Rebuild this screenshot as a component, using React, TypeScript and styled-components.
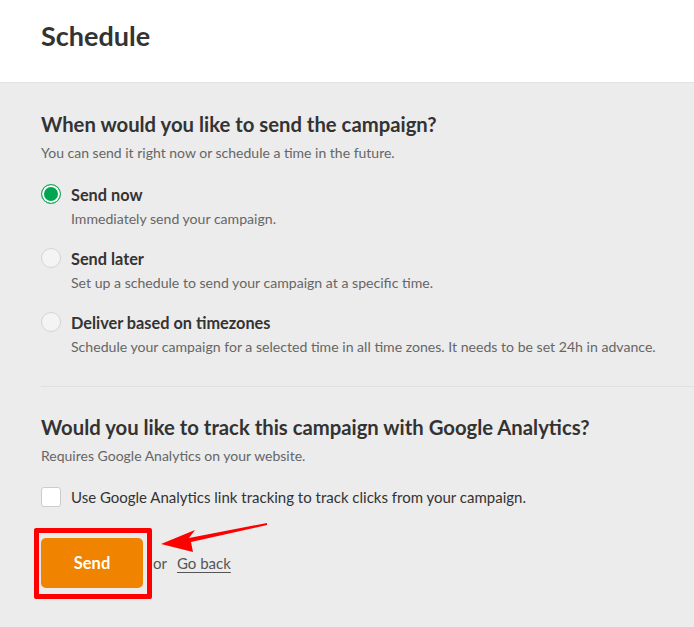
import React from 'react';
import styled, { createGlobalStyle } from 'styled-components';

const GlobalStyle = createGlobalStyle`
    html, body {
        margin: 0;
        padding: 0;
        background: #ececec;
        font-family: Lato, "Open Sans", Arial, sans-serif;
        color: #333;
    }
`;

const Page = styled.div`
    min-height: 627px;
    background: #ececec;
`;
const TopBar = styled.header`
    background: #fff;
    height: 83px;
    border-bottom: 1px solid #e2e2e2;
    padding-left: 41px;
    display: flex;
    align-items: center;
    box-sizing: border-box;
`;
const Title = styled.h1`
    margin: 0 0 12px;
    font-size: 27px;
    font-weight: 700;
    color: #333;
`;
const Body = styled.main`
    padding: 28px 0 0 41px;
`;
const Section = styled.section<{ $divided?: boolean }>`
    padding-bottom: ${p => (p.$divided ? '30px' : '0')};
    border-bottom: ${p => (p.$divided ? '1px solid #e0e0e0' : 'none')};
    margin-bottom: ${p => (p.$divided ? '27px' : '0')};
`;
const Heading = styled.h2`
    margin: 0;
    font-size: 20.3px;
    font-weight: 700;
    line-height: 26px;
    color: #333;
`;
const Hint = styled.p`
    margin: 7px 0 0;
    font-size: 14px;
    line-height: 18px;
    color: #666;
`;
const OptionList = styled.div`
    margin-top: 22px;
    display: flex;
    flex-direction: column;
    gap: 20px;
`;
const Option = styled.label`
    display: grid;
    grid-template-columns: 20px 1fr;
    column-gap: 10px;
    row-gap: 6px;
    align-items: center;
`;
const Radio = styled.span<{ $checked?: boolean }>`
    width: 20px;
    height: 20px;
    box-sizing: border-box;
    border-radius: 50%;
    border: 1px solid ${p => (p.$checked ? '#1ea85a' : '#d4d4d4')};
    background: ${p => (p.$checked ? '#00a651' : '#f4f4f4')};
    box-shadow: ${p => (p.$checked ? 'inset 0 0 0 2px #fff' : 'none')};
`;
const OptionLabel = styled.span`
    font-size: 16.3px;
    font-weight: 700;
    color: #333;
`;
const OptionDesc = styled.span`
    grid-column: 2;
    font-size: 14.1px;
    line-height: 18px;
    color: #666;
`;
const CheckRow = styled.label`
    margin-top: 22px;
    display: flex;
    align-items: center;
    gap: 10px;
    font-size: 15px;
    color: #333;
`;
const Checkbox = styled.span`
    width: 20px;
    height: 20px;
    box-sizing: border-box;
    border: 1px solid #ccc;
    border-radius: 3px;
    background: #fff;
`;
const Actions = styled.div`
    margin-top: 31px;
    display: flex;
    align-items: center;
    gap: 10px;
`;
const ButtonWrap = styled.div`
    position: relative;
`;
const SendButton = styled.button`
    width: 102px;
    height: 50px;
    border: none;
    border-radius: 5px;
    background: #f08300;
    color: #fff;
    font-family: inherit;
    font-size: 16.5px;
    font-weight: 700;
    cursor: pointer;
`;
const Highlight = styled.span`
    position: absolute;
    left: -7px;
    top: -10px;
    width: 118px;
    height: 71px;
    box-sizing: border-box;
    border: 5px solid #ff0000;
    border-radius: 2px;
    pointer-events: none;
`;
const Arrow = styled.svg`
    position: absolute;
    left: 112px;
    top: -20px;
    pointer-events: none;
`;
const Or = styled.span`
    font-size: 15px;
    color: #555;
`;
const BackLink = styled.a`
    font-size: 15px;
    color: #555;
    text-decoration: underline;
    text-underline-offset: 3px;
`;

const options = [
    { label: 'Send now', desc: 'Immediately send your campaign.', checked: true },
    { label: 'Send later', desc: 'Set up a schedule to send your campaign at a specific time.' },
    {
        label: 'Deliver based on timezones',
        desc: 'Schedule your campaign for a selected time in all time zones. It needs to be set 24h in advance.',
    },
];

export default function App() {
    return (
        <Page>
            <GlobalStyle />
            <TopBar>
                <Title>Schedule</Title>
            </TopBar>
            <Body>
                <Section $divided>
                    <Heading>When would you like to send the campaign?</Heading>
                    <Hint>You can send it right now or schedule a time in the future.</Hint>
                    <OptionList>
                        {options.map(o => (
                            <Option key={o.label}>
                                <Radio $checked={o.checked} />
                                <OptionLabel>{o.label}</OptionLabel>
                                <OptionDesc>{o.desc}</OptionDesc>
                            </Option>
                        ))}
                    </OptionList>
                </Section>
                <Section>
                    <Heading>Would you like to track this campaign with Google Analytics?</Heading>
                    <Hint>Requires Google Analytics on your website.</Hint>
                    <CheckRow>
                        <Checkbox />
                        Use Google Analytics link tracking to track clicks from your campaign.
                    </CheckRow>
                </Section>
                <Actions>
                    <ButtonWrap>
                        <SendButton>Send</SendButton>
                        <Highlight />
                        <Arrow width="120" height="40" viewBox="0 0 120 40">
                            <path d="M8 26 L42 12 L36 20 L114 5 L114 7 L38 24 L40 34 Z" fill="#ff0000" />
                        </Arrow>
                    </ButtonWrap>
                    <Or>or</Or>
                    <BackLink href="#">Go back</BackLink>
                </Actions>
            </Body>
        </Page>
    );
}
